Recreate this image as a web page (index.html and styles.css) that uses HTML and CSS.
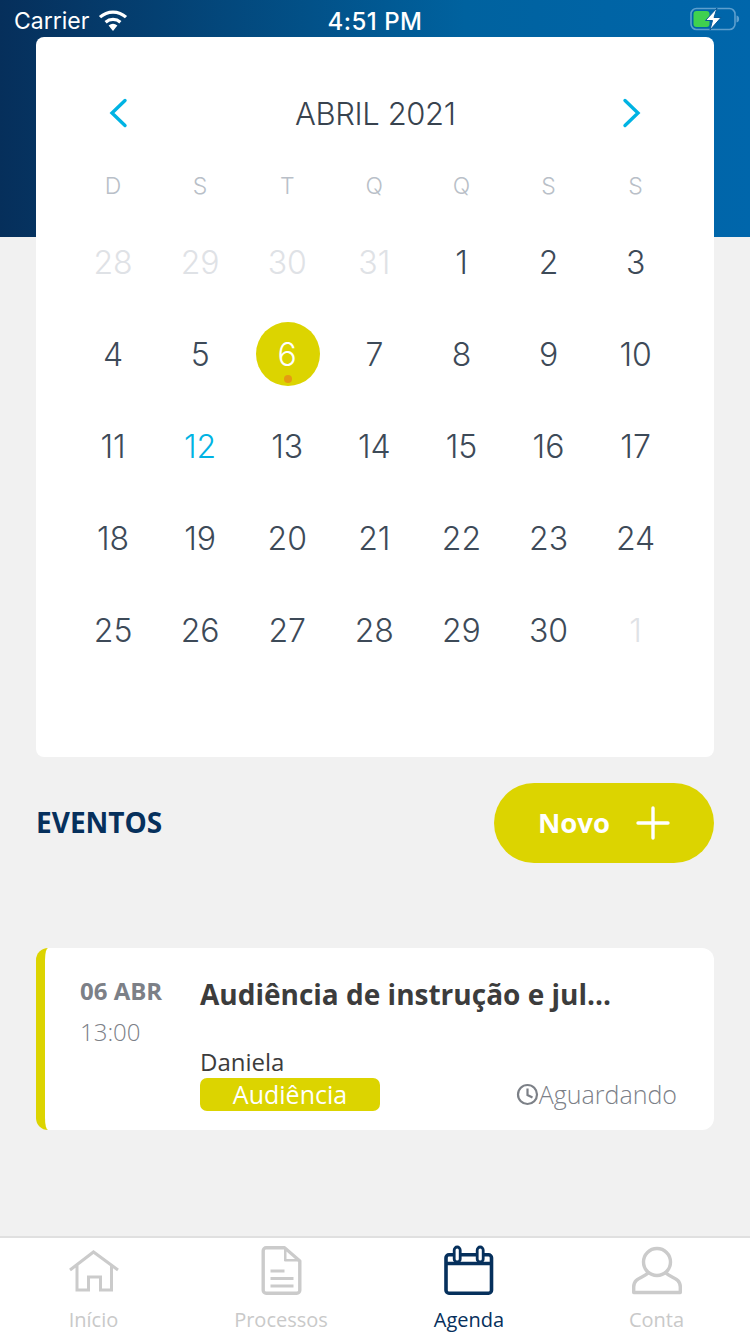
FILE: index.html
```html
<!DOCTYPE html>
<html lang="pt-BR">
<head>
    <meta charset="UTF-8">
    <meta name="viewport" content="width=device-width, initial-scale=1.0">
    <title>Agenda</title>
    <link rel="stylesheet" href="styles.css">
</head>
<body>
    <div class="screen">
        <div class="header">
            <div class="status-bar">
                <div class="status-left">
                    <span>Carrier</span>
                    <svg class="wifi" width="30" height="22" viewBox="0 0 30 22">
                        <path d="M15 21 10.600 15.600a7 7 0 0 1 8.800 0Z" fill="#fff"/>
                        <path d="M7.600 12.200a11.400 11.400 0 0 1 14.800 0" fill="none" stroke="#fff" stroke-width="3.200"/>
                        <path d="M2 7.200a19 19 0 0 1 26 0" fill="none" stroke="#fff" stroke-width="3.200"/>
                    </svg>
                </div>
                <div class="status-time">4:51 PM</div>
                <div class="status-right">
                    <svg width="54" height="24" viewBox="0 0 54 24">
                        <rect x="1" y="1.500" width="44" height="21" rx="5.500" fill="none" stroke="#5d9fce" stroke-width="1.600"/>
                        <path d="M46.500 8.500c2 .6 2.600 1.800 2.600 3.500s-.6 2.900-2.600 3.500Z" fill="#5d9fce"/>
                        <rect x="3.500" y="4" width="16" height="16" rx="3" fill="#3fd14f"/>
                        <path d="M27 1 15.500 13.500h7l-2.500 9.500L31 10.500h-7Z" fill="#fff" stroke="#0a5a99" stroke-width="1"/>
                    </svg>
                </div>
            </div>
        </div>

        <div class="content">
            <div class="calendar">
                <div class="calendar-head">
                    <svg class="arrow" width="20" height="30" viewBox="0 0 20 30"><path d="M17 2.500 4 15l13 12.500" fill="none" stroke="#00b3e3" stroke-width="3.400" stroke-linecap="round"/></svg>
                    <span class="month">ABRIL 2021</span>
                    <svg class="arrow" width="20" height="30" viewBox="0 0 20 30"><path d="M3 2.500 16 15 3 27.500" fill="none" stroke="#00b3e3" stroke-width="3.400" stroke-linecap="round"/></svg>
                </div>
                <div class="weekdays">
                    <span>D</span><span>S</span><span>T</span><span>Q</span><span>Q</span><span>S</span><span>S</span>
                </div>
                <div class="days">
                    <span class="day muted">28</span><span class="day muted">29</span><span class="day muted">30</span><span class="day muted">31</span><span class="day">1</span><span class="day">2</span><span class="day">3</span>
                    <span class="day">4</span><span class="day">5</span><span class="day selected">6</span><span class="day">7</span><span class="day">8</span><span class="day">9</span><span class="day">10</span>
                    <span class="day">11</span><span class="day today">12</span><span class="day">13</span><span class="day">14</span><span class="day">15</span><span class="day">16</span><span class="day">17</span>
                    <span class="day">18</span><span class="day">19</span><span class="day">20</span><span class="day">21</span><span class="day">22</span><span class="day">23</span><span class="day">24</span>
                    <span class="day">25</span><span class="day">26</span><span class="day">27</span><span class="day">28</span><span class="day">29</span><span class="day">30</span><span class="day muted">1</span>
                </div>
            </div>

            <div class="events-head">
                <h2>EVENTOS</h2>
                <div class="new-button">
                    <span>Novo</span>
                    <svg width="34" height="34" viewBox="0 0 34 34"><path d="M17 2v30M2 17h30" stroke="#fff" stroke-width="3.400" stroke-linecap="round"/></svg>
                </div>
            </div>

            <div class="event-card">
                <div class="event-date">
                    <div class="event-day">06 ABR</div>
                    <div class="event-hour">13:00</div>
                </div>
                <div class="event-info">
                    <div class="event-title">Audiência de instrução e jul...</div>
                    <div class="event-person">Daniela</div>
                    <div class="event-bottom">
                        <span class="event-tag">Audiência</span>
                        <span class="event-status">
                            <svg width="23" height="23" viewBox="0 0 23 23"><circle cx="11.500" cy="11.500" r="9.500" fill="none" stroke="#7c8087" stroke-width="2.200"/><path d="M11.500 5.500v6.500l5 2.500" fill="none" stroke="#7c8087" stroke-width="2.200"/></svg>Aguardando
                        </span>
                    </div>
                </div>
            </div>
        </div>

        <div class="tabbar">
            <div class="tab">
                <svg class="home-icon" width="52" height="44" viewBox="0 0 52 44"><path d="M2 20 25.500 2 50 20M9 14.500V40h11.500V27h12v13H43.500V14.500" fill="none" stroke="#cbcbcb" stroke-width="3"/></svg>
                <span>Início</span>
            </div>
            <div class="tab">
                <svg width="44" height="52" viewBox="0 0 44 52"><path d="M25.500 2.700H7.200a3 3 0 0 0-3 3v39.600a3 3 0 0 0 3 3h30.600a3 3 0 0 0 3-3V16Z" fill="none" stroke="#cbcbcb" stroke-width="3.400" stroke-linejoin="round"/><path d="M25.500 2.700V16h15.300Z" fill="#cbcbcb" stroke="#cbcbcb" stroke-width="1" stroke-linejoin="round"/><path d="M27.500 6.500V14H36Z" fill="#fff"/><path d="M11.500 26h14M11.500 33.500h23M11.500 41h23" stroke="#cbcbcb" stroke-width="3.200"/></svg>
                <span>Processos</span>
            </div>
            <div class="tab active">
                <svg width="52" height="52" viewBox="0 0 52 52"><rect x="3" y="9.800" width="45.500" height="38.400" rx="3" fill="none" stroke="#06305c" stroke-width="3.600"/><path d="M3 18.500h45.500" stroke="#06305c" stroke-width="3.600"/><rect x="11.200" y="2" width="6" height="15" rx="3" fill="#fff" stroke="#06305c" stroke-width="2.800"/><rect x="34.200" y="2" width="6" height="15" rx="3" fill="#fff" stroke="#06305c" stroke-width="2.800"/></svg>
                <span>Agenda</span>
            </div>
            <div class="tab">
                <svg width="52" height="52" viewBox="0 0 52 52"><circle cx="26" cy="17" r="13.500" fill="none" stroke="#cbcbcb" stroke-width="3.400"/><path d="M17 28C12 33 2.700 33 2.700 42v5.500h46.600V42C49.300 33 40 33 35 28" fill="none" stroke="#cbcbcb" stroke-width="3.400" stroke-linejoin="round"/></svg>
                <span>Conta</span>
            </div>
        </div>
    </div>
</body>
</html>
```
FILE: styles.css
```css
/* --- Base --- */
* {
    margin: 0;
    padding: 0;
    box-sizing: border-box;
}

body {
    background: #f1f1f1;
    font-family: "Open Sans", "Liberation Sans", sans-serif;
    color: #3c3c3c;
}

.screen {
    width: 750px;
    height: 1334px;
    display: flex;
    flex-direction: column;
    overflow: hidden;
}

/* --- Header --- */
.header {
    height: 237px;
    flex-shrink: 0;
    background: linear-gradient(90deg, #062f5b 0%, #00629f 62%, #0066ab 100%);
}

.status-bar {
    height: 40px;
    padding: 2px 6px 0 14px;
    display: flex;
    align-items: center;
    justify-content: space-between;
    position: relative;
    color: #fff;
    font-family: Inter, "Liberation Sans", sans-serif;
    font-size: 23px;
}

.status-left {
    display: flex;
    align-items: center;
    gap: 9px;
}

.status-time {
    font-size: 24px;
    font-weight: 500;
    letter-spacing: 0.5px;
    position: absolute;
    left: 0;
    right: 0;
    text-align: center;
}

.status-right {
    display: flex;
    align-items: center;
    margin-top: -4px;
}

/* --- Content --- */
.content {
    flex: 1;
    margin-top: -200px;
    padding: 0 36px;
    display: flex;
    flex-direction: column;
}

/* --- Calendar --- */
.calendar {
    height: 720px;
    background: #fff;
    border-radius: 8px;
    padding: 0 35px 0 33.5px;
    font-family: Inter, "Liberation Sans", sans-serif;
    font-weight: 300;
}

.calendar-head {
    height: 152px;
    padding: 0 36.5px 0 38.5px;
    margin-bottom: -18px;
    display: flex;
    align-items: center;
    justify-content: space-between;
}

.month {
    font-size: 31px;
    font-weight: 300;
    letter-spacing: -0.4px;
    color: #38434f;
}

.weekdays {
    display: grid;
    grid-template-columns: repeat(7, 87.1px);
    margin-top: -4px;
}

.weekdays span {
    text-align: center;
    font-size: 23px;
    color: #b9bfc8;
    line-height: 30px;
}

.days {
    display: grid;
    grid-template-columns: repeat(7, 87.1px);
    grid-auto-rows: 92px;
    margin-top: 15px;
}

.day {
    display: flex;
    align-items: center;
    justify-content: center;
    font-size: 32px;
    color: #3d4a58;
    position: relative;
}

.day.muted {
    color: #dfe2e6;
}

.day.today {
    color: #00b3e3;
}

.day.selected {
    color: #fff;
    z-index: 0;
}

.day.selected::before {
    content: "";
    position: absolute;
    left: 12px;
    top: 14px;
    width: 64px;
    height: 64px;
    border-radius: 50%;
    background: #dcd400;
    z-index: -1;
}

.day.selected::after {
    content: "";
    position: absolute;
    left: 40px;
    top: 67px;
    width: 8px;
    height: 8px;
    border-radius: 50%;
    background: #e59a12;
}

/* --- Events --- */
.events-head {
    margin-top: 26px;
    display: flex;
    align-items: center;
    justify-content: space-between;
}

.events-head h2 {
    font-size: 28px;
    font-weight: 700;
    line-height: 78px;
    height: 80px;
    color: #06305c;
}

.new-button {
    width: 220px;
    height: 80px;
    border-radius: 40px;
    background: #dcd400;
    color: #fff;
    font-size: 27.5px;
    font-weight: 700;
    line-height: 78px;
    display: flex;
    align-items: center;
    justify-content: center;
    gap: 26px;
}

.event-card {
    margin-top: 85px;
    height: 182px;
    background: #fff;
    border-radius: 12px;
    border-left: 9px solid #dcd400;
    display: flex;
    padding: 26px 37px 19px 35px;
}

.event-date {
    width: 120px;
    flex-shrink: 0;
}

.event-day {
    font-size: 24px;
    font-weight: 700;
    color: #7c8087;
    line-height: 34px;
}

.event-hour {
    margin-top: 7px;
    font-size: 24px;
    font-weight: 300;
    color: #7c8087;
    line-height: 34px;
}

.event-info {
    flex: 1;
    display: flex;
    flex-direction: column;
}

.event-title {
    font-size: 28px;
    font-weight: 700;
    line-height: 40px;
    color: #3c3c3c;
}

.event-person {
    margin-top: 32px;
    font-size: 24px;
    line-height: 32px;
    color: #3c3c3c;
}

.event-bottom {
    margin-top: -1px;
    display: flex;
    align-items: center;
    justify-content: space-between;
}

.event-tag {
    width: 180px;
    height: 33px;
    border-radius: 7px;
    background: #dcd400;
    color: #fff;
    font-size: 25px;
    line-height: 33px;
    text-align: center;
}

.event-status {
    display: flex;
    align-items: center;
    font-size: 25px;
    font-weight: 300;
    color: #7c8087;
}

/* --- Tab bar --- */
.tabbar {
    height: 98px;
    flex-shrink: 0;
    background: #fff;
    border-top: 2px solid #e0e0e0;
    display: grid;
    grid-template-columns: 187px 188px 188px 187px;
}

.tab {
    height: 96px;
    padding-top: 7px;
    display: flex;
    flex-direction: column;
    align-items: center;
    justify-content: space-between;
    color: #c9c9c9;
    font-size: 20px;
    line-height: 28px;
}

.tab.active {
    color: #06305c;
}

.home-icon {
    margin-top: 5px;
}
```
